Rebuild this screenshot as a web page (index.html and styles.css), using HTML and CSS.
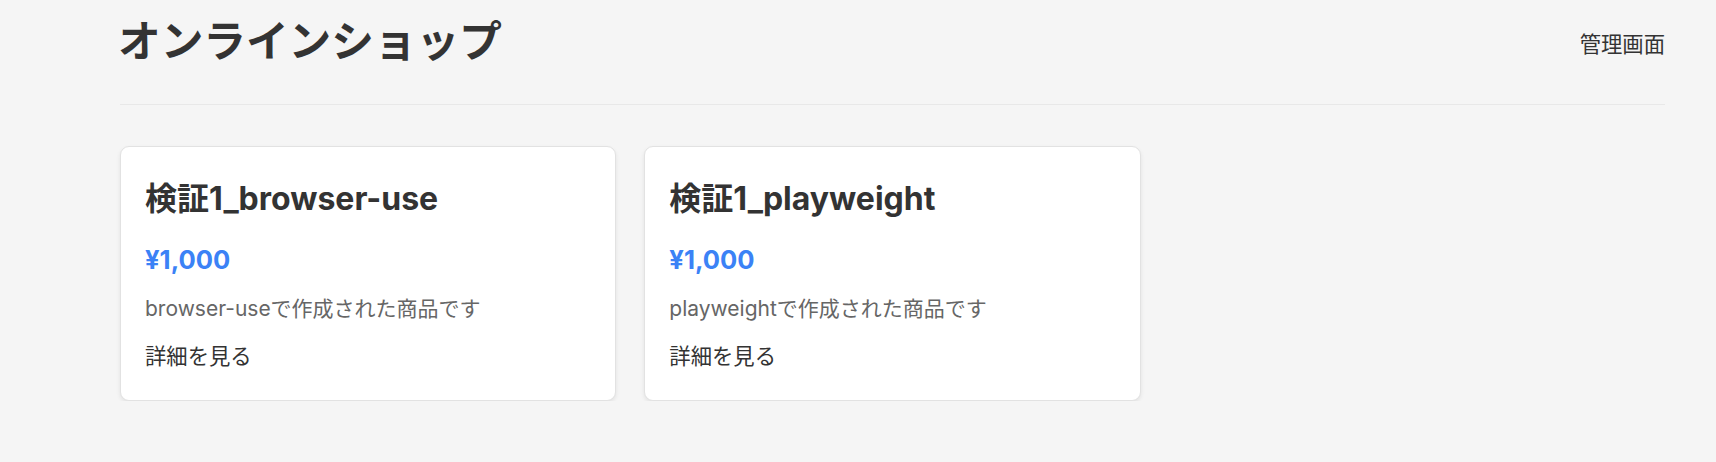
FILE: index.html
```html
<!DOCTYPE html>
<html lang="ja">
  <head>
    <meta charset="UTF-8" />
    <meta name="viewport" content="width=device-width, initial-scale=1.0" />
    <title>オンラインショップ</title>
    <link rel="stylesheet" href="styles.css">
  </head>
  <body>
    <div class="container">
      <header class="header">
        <h1 class="site-title">オンラインショップ</h1>
        <a class="admin-link" href="#">管理画面</a>
      </header>

      <!-- 商品一覧 -->
      <main class="product-grid">
        <div class="product-card">
          <h2 class="product-name">検証1_browser-use</h2>
          <p class="product-price">¥1,000</p>
          <p class="product-desc">browser-useで作成された商品です</p>
          <a class="detail-link" href="#">詳細を見る</a>
        </div>
        <div class="product-card">
          <h2 class="product-name">検証1_playweight</h2>
          <p class="product-price">¥1,000</p>
          <p class="product-desc">playweightで作成された商品です</p>
          <a class="detail-link" href="#">詳細を見る</a>
        </div>
      </main>
    </div>
  </body>
</html>
```

FILE: styles.css
```css
body {
  margin: 0;
  background-color: #f5f5f5;
  color: #333;
  font-family: "Inter", "Noto Sans CJK JP", sans-serif;
  font-size: 21.33px;
}
.container {
  margin-left: 120px;
  width: 1545px;
}
.header {
  display: flex;
  justify-content: space-between;
  align-items: center;
  height: 84px;
  padding-bottom: 20px;
  border-bottom: 1px solid #e8e8e8;
}
.site-title {
  margin: 0 0 0 -2px;
  font-size: 42.67px;
  font-weight: 700;
  line-height: 1;
}
.admin-link {
  color: #333;
  text-decoration: none;
}
.product-grid {
  display: grid;
  grid-template-columns: repeat(3, 1fr);
  gap: 28px;
  margin-top: 41px;
}
.product-card {
  background-color: white;
  border: 1px solid #e2e2e2;
  border-radius: 9px;
  box-shadow: 0 2px 4px rgba(0, 0, 0, 0.08);
  padding: 24px 24px 30px;
}
.product-name {
  margin: 10px 0 28px;
  font-size: 32px;
  font-weight: 700;
  line-height: 36px;
}
.product-price {
  margin: 0 0 20px;
  color: #3b82f6;
  font-size: 25.6px;
  font-weight: 700;
  line-height: 30px;
}
.product-desc {
  margin: 0 0 19px;
  color: #666;
  font-size: 21px;
  line-height: 28px;
}
.detail-link {
  display: block;
  color: #333;
  text-decoration: none;
  line-height: 28px;
}
```
